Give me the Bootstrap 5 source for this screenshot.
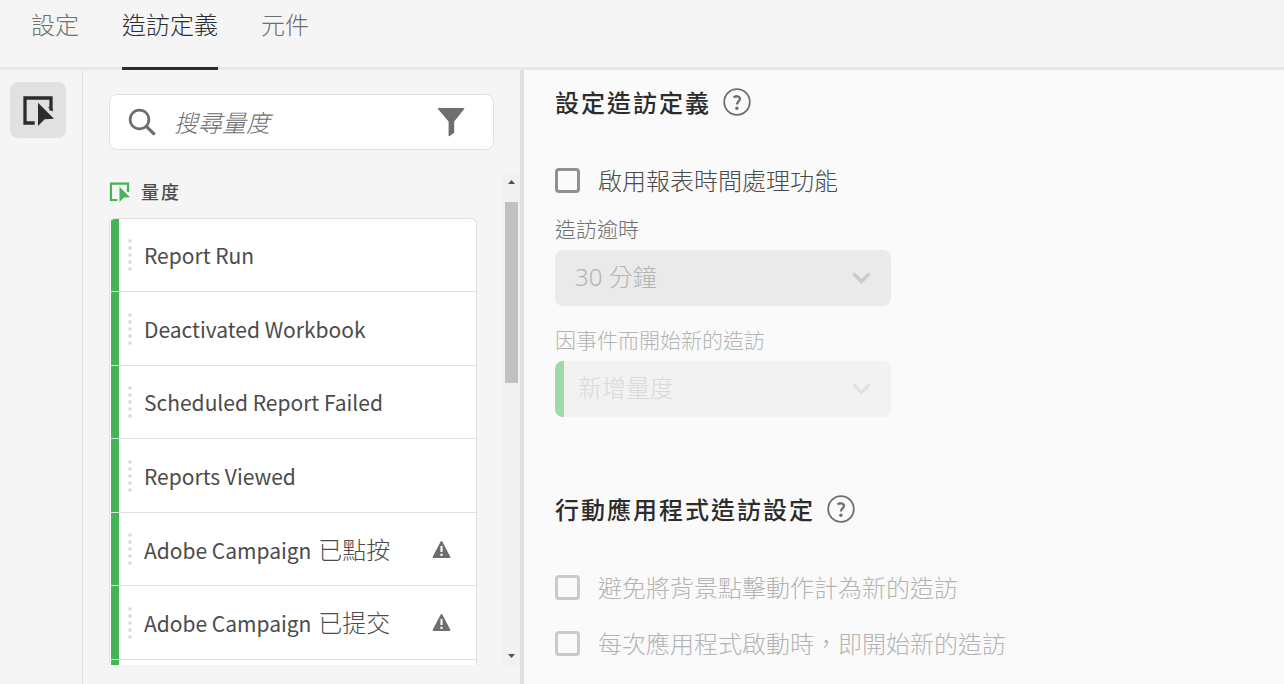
<!DOCTYPE html>
<html lang="zh-Hant">
<head>
<meta charset="utf-8">
<meta name="viewport" content="width=device-width, initial-scale=1">
<title>造訪定義</title>
<link href="https://cdn.jsdelivr.net/npm/bootstrap@5.3.0/dist/css/bootstrap.min.css" rel="stylesheet">
<style>
body{background:#f5f5f5;color:#4b4b4b;font-family:"Noto Sans CJK TC",sans-serif;font-size:24px;font-weight:300;line-height:36px}
.topbar{border-bottom:3px solid #e8e8e8;padding-left:31px;gap:43px}
.topbar .nav-link{padding:6px 0 25px;margin-bottom:-3px;border-bottom:3px solid transparent;color:#6e6e6e}
.topbar .nav-link.active{color:#2c2c2c;border-color:#2c2c2c}
.rail{width:83px;padding:12px 0 0 10px;border-right:1px solid #e1e1e1}
.rail .tool{width:56px;height:56px;border-radius:8px;background:#e1e1e1;color:#2c2c2c}
.side{width:441px;border-right:4px solid #e1e1e1;padding:24px 0 19px 26px}
.search{height:56px;margin-right:26px;padding:0 24px 0 16px;background:#fff;border:1px solid #e1e1e1;border-radius:8px;color:#6e6e6e}
.search input{font-style:italic;font-weight:300;font-size:24px;color:#4b4b4b;min-width:0}
.search input::placeholder{color:#6e6e6e;opacity:1}
.scroller{margin-top:23px;min-height:0}
.group-title{font-size:18px;line-height:24px;font-weight:500;letter-spacing:2px;color:#4b4b4b;margin:6px 0 15px;gap:11px}
.metrics{border:1px solid #e1e1e1;border-bottom:0;border-radius:6px 6px 0 0;background:#fff;width:368px;overflow:hidden}
.metric{height:73px;border-bottom:1px solid #e1e1e1;padding-right:25px;font-size:21px;font-weight:400}
.metric:nth-child(even){height:74px}
.metric::before{content:"";width:8px;margin-left:1px;align-self:stretch;background:#44b556}
.metric .cjk{font-size:24px;font-weight:300;margin-left:2px}
.grip{width:4px;height:32px;margin:0 12px 0 9px;background:radial-gradient(circle at 2px 2px,#e1e1e1 2px,transparent 2px) 0 0/4px 7px}
.scrollbar-track{width:17px;background:#f1f1f1}
.scrollbar-track .thumb{width:13px;height:181px;margin:12px 0 auto;background:#c1c1c1}
.scrollbar-track svg{height:17px;width:17px}
.content{background:#fafafa;padding:14px 31px 0}
.section-title{font-size:24px;line-height:36px;font-weight:500;letter-spacing:2px;color:#2c2c2c;margin:0}
.section-head{gap:12px;margin-bottom:32px}
.section-head.later{margin-top:74px}
.help{color:#6e6e6e;line-height:0}
.check{gap:18px;height:56px}
.check .form-check-input{width:25px;height:25px;margin:0;border:3px solid #909090;border-radius:4px;background:#fafafa}
.check .form-check-label{color:#4b4b4b}
.check .form-check-input:disabled{border-color:#cacaca;opacity:1}
.check .form-check-input:disabled~.form-check-label{color:#b3b3b3;opacity:1}
.fieldset-w{width:336px;margin-top:4px}
.fieldset-w+.fieldset-w{margin-top:17px}
.fieldset-w .form-label{display:block;font-size:21px;line-height:32px;margin:0 0 6px;color:#6e6e6e}
.fieldset-w .form-label.dim{color:#b3b3b3}
.picker{height:56px;border:0;border-radius:8px;font-family:"Noto Sans","Noto Sans CJK TC",sans-serif;font-size:24px;font-weight:300;padding:5px 48px 7px 20px}
.picker:disabled{background:#eaeaea;color:#b3b3b3;opacity:1}
.picker.drop:disabled{background:#f2f2f2;color:#d9d9d9;border-left:9px solid #9fd9a9;padding-left:14px}
.chev{right:20px;top:22px;color:#cacaca;pointer-events:none}
.chev.dim{color:#e1e1e1}
</style>
</head>
<body class="vh-100 d-flex flex-column overflow-hidden">
<svg class="d-none" aria-hidden="true">
  <symbol id="i-help" viewBox="0 0 28 28"><circle cx="14" cy="14" r="12.8" fill="none" stroke="currentColor" stroke-width="1.8"/><path d="M10.6 9.6C11.5 8.6 13 8.1 14.3 8.3c1.700.2 2.700 1.200 2.700 2.500 0 2.300-3 2.700-3 5.700" fill="none" stroke="currentColor" stroke-width="2.300"/><circle cx="13.900" cy="20.200" r="1.700" fill="currentColor"/></symbol>
  <symbol id="i-chev" viewBox="0 0 19 13"><path d="M2.500 2.500l7 7 7-7" fill="none" stroke="currentColor" stroke-width="3.400" stroke-linecap="round"/></symbol>
  <symbol id="i-metric" viewBox="0 0 32 32"><path d="M29 16.500V4H3v25h9.700" fill="none" stroke="currentColor" stroke-width="3.300"/><path d="M25.500 12.500l5.200 5.200V15z" fill="currentColor"/><path d="M16 8.800L32 24.700l-9.300.6L16 32z" fill="currentColor"/></symbol>
  <symbol id="i-alert" viewBox="0 0 18 17"><path d="M8.200.6a.9.900 0 0 1 1.600 0l8 15.100a.8.800 0 0 1-.7 1.200H.9a.8.800 0 0 1-.7-1.200z" fill="currentColor"/><path d="M9 5v6M9 12.800v2.200" stroke="#fff" stroke-width="2.100"/></symbol>
</svg>

<nav class="topbar nav flex-shrink-0" aria-label="設定分頁">
  <a class="nav-link" href="#">設定</a>
  <a class="nav-link active" aria-current="page" href="#">造訪定義</a>
  <a class="nav-link" href="#">元件</a>
</nav>

<div class="d-flex flex-grow-1 overflow-hidden">
  <div class="rail flex-shrink-0">
    <button type="button" class="tool btn border-0 p-0 d-flex align-items-center justify-content-center" aria-label="量度"><svg width="32" height="32"><use href="#i-metric"/></svg></button>
  </div>

  <aside class="side flex-shrink-0 d-flex flex-column">
    <div class="search d-flex align-items-center flex-shrink-0">
      <svg class="flex-shrink-0" width="32" height="32" viewBox="0 0 32 32" fill="none" stroke="currentColor"><circle cx="13.500" cy="13.500" r="9.400" stroke-width="2.700"/><path d="M20.300 20.300l8.400 8.400" stroke-width="3.200"/></svg>
      <input class="form-control border-0 shadow-none p-0 ms-3 bg-transparent" type="text" placeholder="搜尋量度" aria-label="搜尋量度">
      <button type="button" class="btn border-0 p-0 lh-1 d-flex" aria-label="篩選"><svg width="36" height="32" viewBox="0 0 36 32" fill="#6e6e6e"><path d="M5.500 2h25.200a.6.600 0 0 1 .5 1L21.200 15.500v11.300l-4.800 3.400a.5.500 0 0 1-.8-.4V15.500L5 3a.6.600 0 0 1 .5-1z"/></svg></button>
    </div>

    <div class="scroller d-flex flex-grow-1 justify-content-between">
      <div class="overflow-hidden">
        <h2 class="group-title d-flex align-items-center"><svg width="21" height="21" color="#44b556"><use href="#i-metric"/></svg>量度</h2>
        <ul class="metrics list-unstyled mb-0">
          <li class="metric d-flex align-items-center"><span class="grip"></span><span>Report Run</span></li>
          <li class="metric d-flex align-items-center"><span class="grip"></span><span>Deactivated Workbook</span></li>
          <li class="metric d-flex align-items-center"><span class="grip"></span><span>Scheduled Report Failed</span></li>
          <li class="metric d-flex align-items-center"><span class="grip"></span><span>Reports Viewed</span></li>
          <li class="metric d-flex align-items-center"><span class="grip"></span><span>Adobe Campaign <span class="cjk">已點按</span></span><svg class="ms-auto" width="19" height="17" color="#6e6e6e"><use href="#i-alert"/></svg></li>
          <li class="metric d-flex align-items-center"><span class="grip"></span><span>Adobe Campaign <span class="cjk">已提交</span></span><svg class="ms-auto" width="19" height="17" color="#6e6e6e"><use href="#i-alert"/></svg></li>
          <li class="metric d-flex"></li>
        </ul>
      </div>
      <div class="scrollbar-track d-flex flex-column align-items-center" aria-hidden="true">
        <svg viewBox="0 0 17 17"><path d="M5 11l3.500-4 3.500 4z" fill="#505050"/></svg>
        <div class="thumb"></div>
        <svg viewBox="0 0 17 17"><path d="M5 6l3.500 4L12 6z" fill="#505050"/></svg>
      </div>
    </div>
  </aside>

  <main class="content flex-grow-1">
    <div class="section-head d-flex align-items-center">
      <h1 class="section-title">設定造訪定義</h1>
      <button type="button" class="help btn border-0 p-0" aria-label="說明"><svg width="28" height="28"><use href="#i-help"/></svg></button>
    </div>
    <div class="check d-flex align-items-center">
      <input class="form-check-input flex-shrink-0" type="checkbox" id="c1"><label class="form-check-label" for="c1">啟用報表時間處理功能</label>
    </div>
    <div class="fieldset-w">
      <label class="form-label" for="s1">造訪逾時</label>
      <div class="position-relative">
        <select class="picker form-select" id="s1" disabled><option>30 分鐘</option></select>
        <svg class="chev position-absolute" width="19" height="13"><use href="#i-chev"/></svg>
      </div>
    </div>
    <div class="fieldset-w">
      <label class="form-label dim" for="s2">因事件而開始新的造訪</label>
      <div class="position-relative">
        <select class="picker drop form-select" id="s2" disabled><option>新增量度</option></select>
        <svg class="chev dim position-absolute" width="19" height="13"><use href="#i-chev"/></svg>
      </div>
    </div>
    <div class="section-head later d-flex align-items-center">
      <h2 class="section-title">行動應用程式造訪設定</h2>
      <button type="button" class="help btn border-0 p-0" aria-label="說明"><svg width="28" height="28"><use href="#i-help"/></svg></button>
    </div>
    <div class="check d-flex align-items-center">
      <input class="form-check-input flex-shrink-0" type="checkbox" id="c2" disabled><label class="form-check-label" for="c2">避免將背景點擊動作計為新的造訪</label>
    </div>
    <div class="check d-flex align-items-center">
      <input class="form-check-input flex-shrink-0" type="checkbox" id="c3" disabled><label class="form-check-label" for="c3">每次應用程式啟動時，即開始新的造訪</label>
    </div>
  </main>
</div>
<script src="https://cdn.jsdelivr.net/npm/bootstrap@5.3.0/dist/js/bootstrap.bundle.min.js"></script>
</body>
</html>
